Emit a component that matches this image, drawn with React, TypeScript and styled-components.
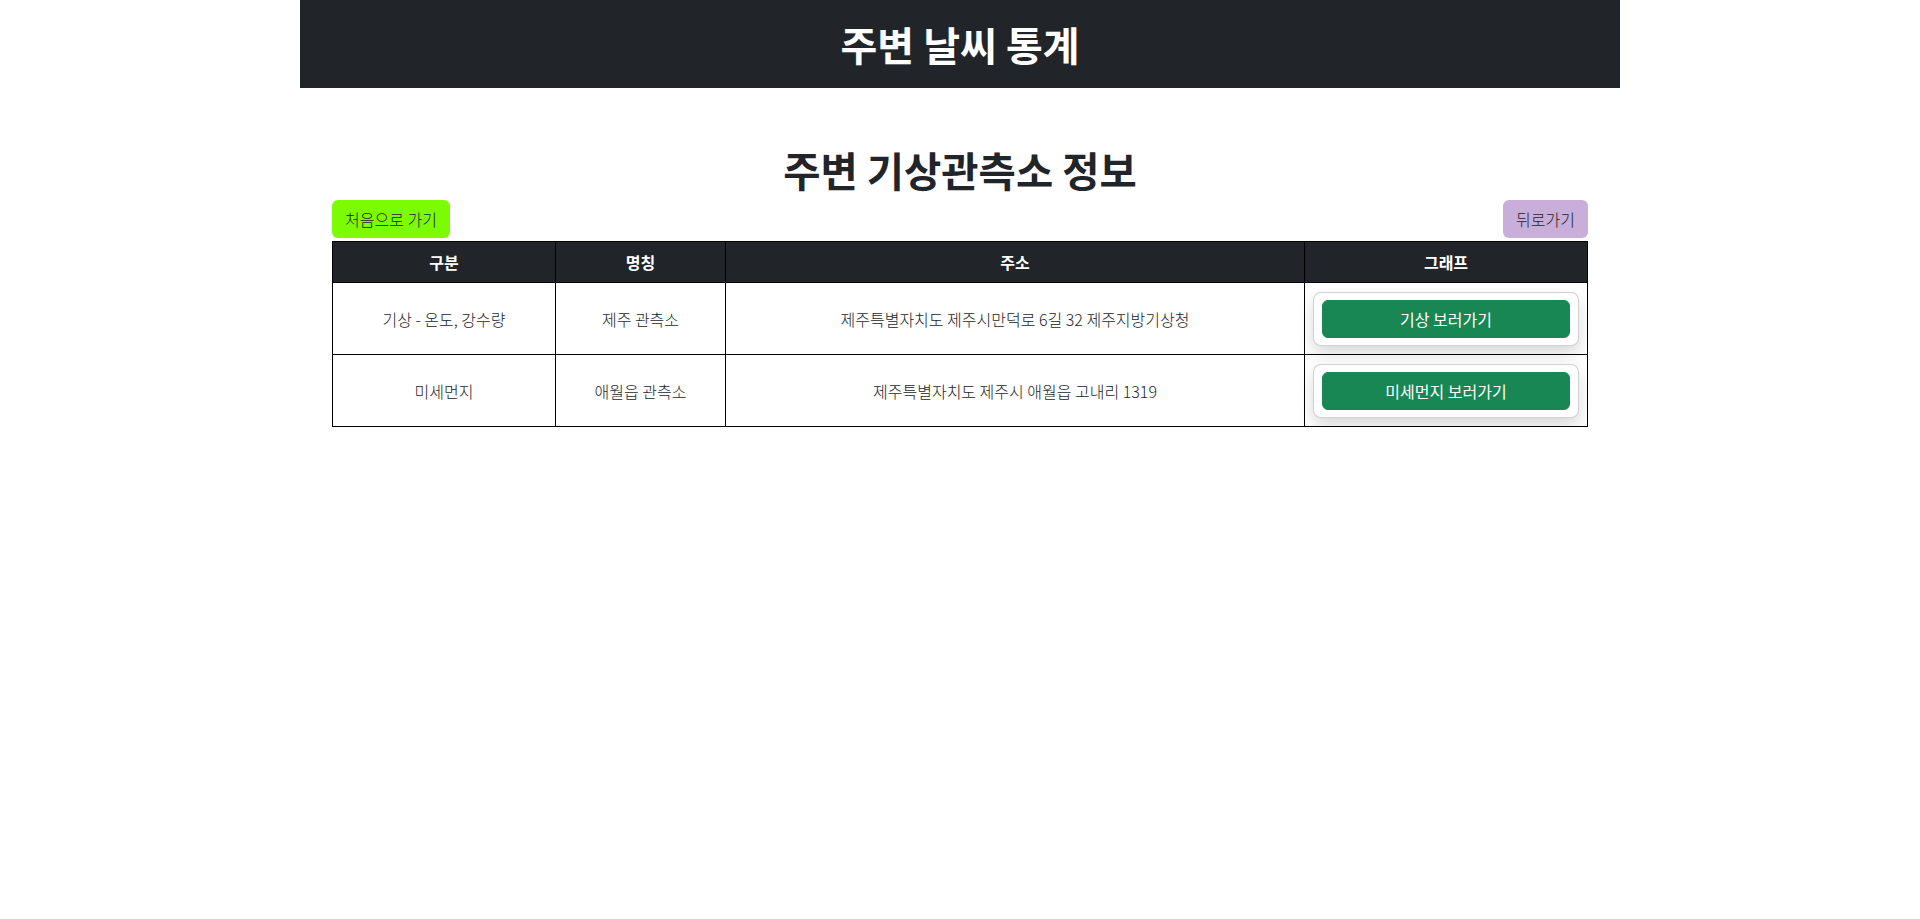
import React from "react";
import styled, { createGlobalStyle } from "styled-components";

const GlobalStyle = createGlobalStyle`
  * { box-sizing: border-box; }
  body {
    margin: 0;
    background: #fff;
    color: #212529;
    font-family: "Noto Sans CJK KR", "Noto Sans", sans-serif;
    font-size: 16px;
    line-height: 1.5;
  }
`;

const Page = styled.div`
  width: 1320px;
  margin: 0 auto;
`;

const TopBar = styled.header`
  height: 88px;
  background: #212529;
  display: flex;
  align-items: center;
  justify-content: center;
`;

const TopTitle = styled.h1`
  margin: 0;
  color: #fff;
  font-size: 40px;
  font-weight: 700;
  line-height: 1.2;
`;

const Main = styled.main`
  padding: 0 32px;
`;

const SubTitle = styled.h1`
  margin: 58px 0 6px;
  text-align: center;
  font-size: 40.5px;
  font-weight: 700;
  line-height: 48px;
  color: #212529;
`;

const Toolbar = styled.div`
  display: flex;
  justify-content: space-between;
  align-items: center;
  margin-bottom: 3px;
`;

const NavButton = styled.button<{ $bg: string }>`
  font-family: inherit;
  font-size: 16px;
  font-weight: 300;
  line-height: 24px;
  padding: 6px 12px;
  border: 1px solid transparent;
  border-radius: 6px;
  background: ${(p) => p.$bg};
  color: #212529;
  cursor: pointer;
`;

const Table = styled.table`
  width: 100%;
  border-collapse: collapse;
  border: 1px solid #000;
`;

const Th = styled.th<{ $w: number }>`
  width: ${(p) => p.$w}px;
  background: #212529;
  color: #fff;
  font-weight: 700;
  font-size: 16px;
  line-height: 24px;
  padding: 8px;
  border: 1px solid #000;
  text-align: center;
`;

const Td = styled.td`
  padding: 8px;
  border: 1px solid #000;
  text-align: center;
  vertical-align: middle;
  font-size: 16px;
  font-weight: 300;
  line-height: 24px;
  color: #212529;
  height: 72px;
`;

const Card = styled.div`
  border: 1px solid rgba(0, 0, 0, 0.18);
  border-radius: 8px;
  padding: 7px 8px;
  background: #fff;
  box-shadow: 0 8px 16px rgba(0, 0, 0, 0.15);
`;

const GreenButton = styled.button`
  display: block;
  width: 100%;
  font-family: inherit;
  font-size: 16px;
  font-weight: 400;
  line-height: 24px;
  padding: 6px 12px;
  border: 1px solid #198754;
  border-radius: 6px;
  background: #198754;
  color: #fff;
  cursor: pointer;
`;

const rows = [
  {
    kind: "기상 - 온도, 강수량",
    name: "제주 관측소",
    addr: "제주특별자치도 제주시만덕로 6길 32 제주지방기상청",
    btn: "기상 보러가기",
  },
  {
    kind: "미세먼지",
    name: "애월읍 관측소",
    addr: "제주특별자치도 제주시 애월읍 고내리 1319",
    btn: "미세먼지 보러가기",
  },
];

export default function App() {
  return (
    <>
      <GlobalStyle />
      <Page>
        <TopBar>
          <TopTitle>주변 날씨 통계</TopTitle>
        </TopBar>
        <Main>
          <SubTitle>주변 기상관측소 정보</SubTitle>
          <Toolbar>
            <NavButton $bg="#7cfc00">처음으로 가기</NavButton>
            <NavButton $bg="#c8aed8">뒤로가기</NavButton>
          </Toolbar>
          <Table>
            <thead>
              <tr>
                <Th $w={223}>구분</Th>
                <Th $w={170}>명칭</Th>
                <Th $w={579}>주소</Th>
                <Th $w={283}>그래프</Th>
              </tr>
            </thead>
            <tbody>
              {rows.map((r) => (
                <tr key={r.name}>
                  <Td>{r.kind}</Td>
                  <Td>{r.name}</Td>
                  <Td>{r.addr}</Td>
                  <Td>
                    <Card>
                      <GreenButton>{r.btn}</GreenButton>
                    </Card>
                  </Td>
                </tr>
              ))}
            </tbody>
          </Table>
        </Main>
      </Page>
    </>
  );
}
